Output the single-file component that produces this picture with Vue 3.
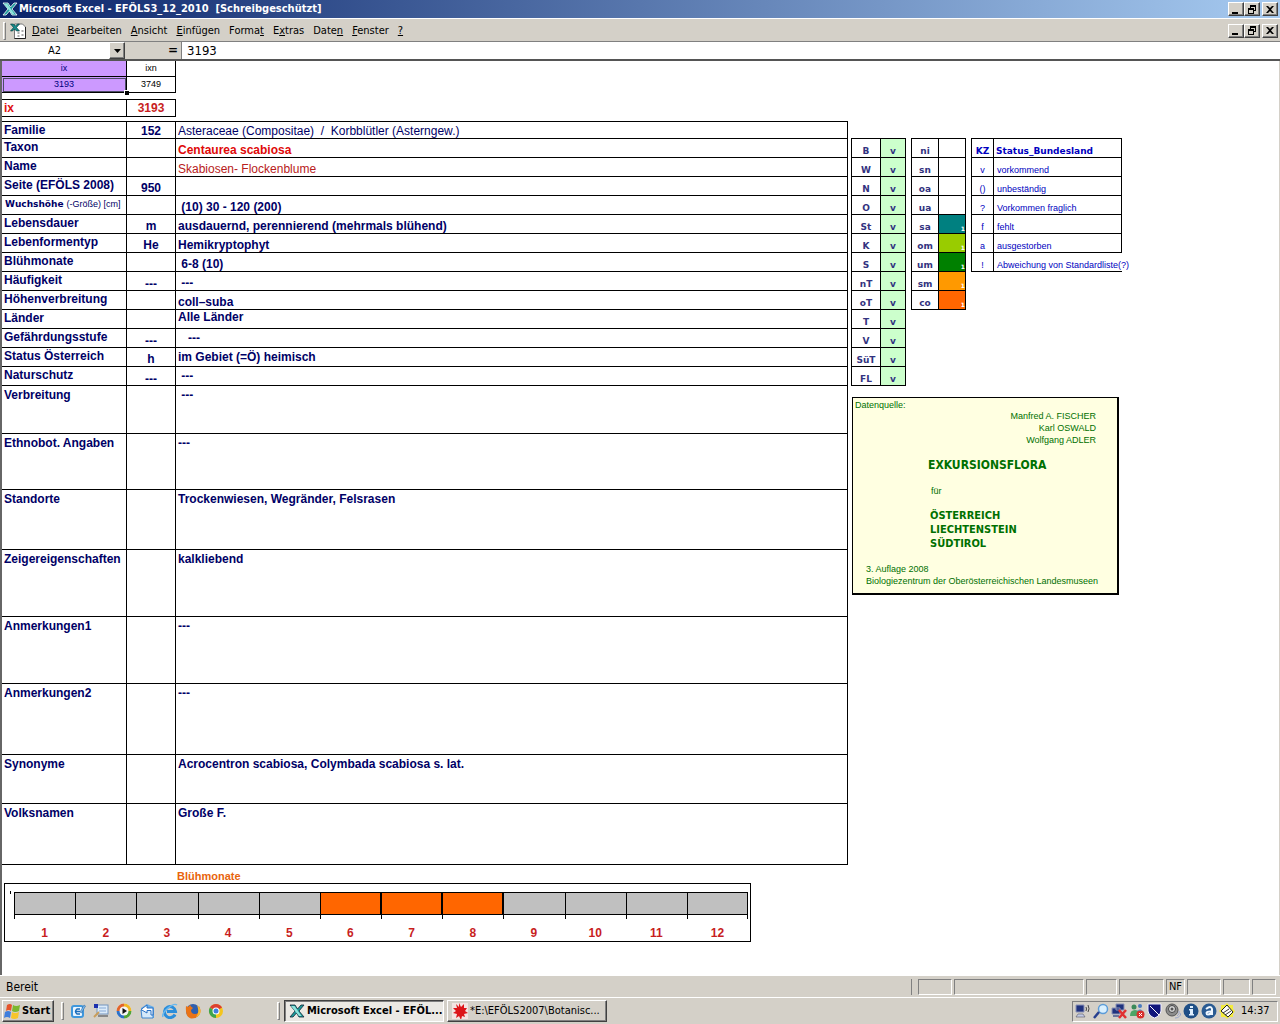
<script setup>
import { ref } from 'vue'

const nameBox = ref('A2')
const formula = ref('3193')

const menus = [
  ['', 'D', 'atei'],
  ['', 'B', 'earbeiten'],
  ['', 'A', 'nsicht'],
  ['', 'E', 'infügen'],
  ['Forma', 't', ''],
  ['E', 'x', 'tras'],
  ['Date', 'n', ''],
  ['', 'F', 'enster'],
  ['', '?', '']
]

const records = [
  { label: 'Familie', code: '152', text: 'Asteraceae (Compositae)  /  Korbblütler (Asterngew.)', row: 'first', cell: 'light' },
  { label: 'Taxon', code: '', text: 'Centaurea scabiosa', cell: 'taxon' },
  { label: 'Name', code: '', text: 'Skabiosen- Flockenblume', cell: 'light common' },
  { label: 'Seite (EFÖLS 2008)', code: '950', text: '' },
  { label: 'Wuchshöhe', hint: '(-Größe) [cm]', code: '', text: ' (10) 30 - 120 (200)' },
  { label: 'Lebensdauer', code: 'm', text: 'ausdauernd, perennierend (mehrmals blühend)' },
  { label: 'Lebenformentyp', code: 'He', text: 'Hemikryptophyt' },
  { label: 'Blühmonate', code: '', text: ' 6-8 (10)' },
  { label: 'Häufigkeit', code: '---', text: ' ---' },
  { label: 'Höhenverbreitung', code: '', text: 'coll–suba' },
  { label: 'Länder', code: '', text: 'Alle Länder', cell: 'top' },
  { label: 'Gefährdungsstufe', code: '---', text: '   ---', cell: 'middle' },
  { label: 'Status Österreich', code: 'h', text: 'im Gebiet (=Ö) heimisch', cell: 'middle' },
  { label: 'Naturschutz', code: '---', text: ' ---', cell: 'middle' },
  { label: 'Verbreitung', code: '', text: ' ---', row: 'tall h48' },
  { label: 'Ethnobot. Angaben', code: '', text: '---', row: 'tall h56' },
  { label: 'Standorte', code: '', text: 'Trockenwiesen, Wegränder, Felsrasen', row: 'tall h60' },
  { label: 'Zeigereigenschaften', code: '', text: 'kalkliebend', row: 'tall h67' },
  { label: 'Anmerkungen1', code: '', text: '---', row: 'tall h67' },
  { label: 'Anmerkungen2', code: '', text: '---', row: 'tall h71' },
  { label: 'Synonyme', code: '', text: 'Acrocentron scabiosa, Colymbada scabiosa s. lat.', row: 'tall h49' },
  { label: 'Volksnamen', code: '', text: 'Große F.', row: 'tall h61' }
]

const states = ['B', 'W', 'N', 'O', 'St', 'K', 'S', 'nT', 'oT', 'T', 'V', 'SüT', 'FL']

const zones = [
  { name: 'ni' }, { name: 'sn' }, { name: 'oa' }, { name: 'ua' },
  { name: 'sa', fill: 'teal' },
  { name: 'om', fill: 'lime' },
  { name: 'um', fill: 'green' },
  { name: 'sm', fill: 'amber' },
  { name: 'co', fill: 'orange' }
]

const legend = [
  ['v', 'vorkommend'],
  ['()', 'unbeständig'],
  ['?', 'Vorkommen fraglich'],
  ['f', 'fehlt'],
  ['a', 'ausgestorben'],
  ['!', 'Abweichung von Standardliste(?)']
]

const flowering = [6, 7, 8]
</script>

<template>
  <div class="desktop">
    <header class="titlebar">
      <svg class="app-icon" viewBox="0 0 16 16" aria-hidden="true">
        <path d="M1 2h5l2.500 4L12 2h3l-5 6 5 6h-5l-2.500-4L4 14H1l5-6z" fill="#1c9c9c" stroke="#fff" stroke-width=".8" />
        <path d="M2 3h3.500l7 10H10z" fill="#8fe4dc" />
      </svg>
      <h1>Microsoft Excel - EFÖLS3_12_2010&nbsp; [Schreibgeschützt]</h1>
      <div class="window-buttons">
        <button aria-label="Minimieren"><svg viewBox="0 0 12 11"><path d="M2 8h6v2H2z" /></svg></button>
        <button aria-label="Wiederherstellen"><svg viewBox="0 0 12 11"><path d="M4 1h6v6H8V6h1V3H5v1H4zM2 4h6v6H2zM3 6v3h4V6z" fill-rule="evenodd" /></svg></button>
        <button class="close" aria-label="Schließen"><svg viewBox="0 0 12 11"><path d="M2 2h2l2 2 2-2h2L7 5.500 10 9H8L6 7 4 9H2l3-3.500z" /></svg></button>
      </div>
    </header>

    <nav class="menubar">
      <span class="grip"></span>
      <svg class="doc-icon" viewBox="0 0 16 16" aria-hidden="true">
        <path d="M4 1h8l3 3v11.500H4z" fill="#fff" stroke="#777" />
        <path d="M15 4v11.500H4" fill="none" stroke="#222" />
        <path d="M7 9h2v2H7zM11 7h2v2h-2zM7 12h2v2H7zM11 11h2v2h-2z" fill="#aaa" />
        <path d="M0 1h3l2 2 2-2h2L6 4.500 9 8H6L4 6 2 8H0l3-3.500z" fill="#168a8a" stroke="#033" stroke-width=".6" />
      </svg>
      <button v-for="(m, i) in menus" :key="i" class="menu">{{ m[0] }}<u>{{ m[1] }}</u>{{ m[2] }}</button>
      <div class="window-buttons">
        <button aria-label="Fenster minimieren"><svg viewBox="0 0 12 11"><path d="M2 8h6v2H2z" /></svg></button>
        <button aria-label="Fenster wiederherstellen"><svg viewBox="0 0 12 11"><path d="M4 1h6v6H8V6h1V3H5v1H4zM2 4h6v6H2zM3 6v3h4V6z" fill-rule="evenodd" /></svg></button>
        <button class="close" aria-label="Fenster schließen"><svg viewBox="0 0 12 11"><path d="M2 2h2l2 2 2-2h2L7 5.500 10 9H8L6 7 4 9H2l3-3.500z" /></svg></button>
      </div>
    </nav>

    <div class="formula-bar">
      <input v-model="nameBox" class="name-box" aria-label="Namenfeld">
      <button class="drop" aria-label="Namen anzeigen"><svg viewBox="0 0 7 4"><path d="M0 0h7L3.500 4z" /></svg></button>
      <span class="equals">=</span>
      <input v-model="formula" class="formula" aria-label="Bearbeitungsleiste">
    </div>

    <main class="sheet">
      <section class="record">
        <table class="index">
          <tbody>
            <tr><td class="filled">ix</td><td>ixn</td></tr>
            <tr><td class="filled selected">3193</td><td>3749</td></tr>
          </tbody>
        </table>
        <table class="index current">
          <tbody>
            <tr><th scope="row">ix</th><td>3193</td></tr>
          </tbody>
        </table>

        <table class="details">
          <colgroup><col class="c-label"><col class="c-code"><col></colgroup>
          <tbody>
            <tr v-for="r in records" :key="r.label" :class="r.row">
              <th scope="row" :class="{ compact: r.hint }">{{ r.label }}<small v-if="r.hint">{{ r.hint }}</small></th>
              <td class="code" :class="{ dash: r.code === '---' }">{{ r.code }}</td>
              <td :class="r.cell">{{ r.text }}</td>
            </tr>
          </tbody>
        </table>

        <h2>Blühmonate</h2>
        <div class="chart">
          <div v-for="m in 12" :key="m" class="month" :class="{ on: flowering.includes(m) }">
            <div class="bar"></div>
            <div class="tick"></div>
            <span>{{ m }}</span>
          </div>
        </div>
      </section>

      <aside class="side">
        <div class="grids">
          <table class="grid states">
            <tbody>
              <tr v-for="s in states" :key="s"><th scope="row">{{ s }}</th><td>v</td></tr>
            </tbody>
          </table>
          <table class="grid zones">
            <tbody>
              <tr v-for="z in zones" :key="z.name"><th scope="row">{{ z.name }}</th><td :class="z.fill">{{ z.fill ? '1' : '' }}</td></tr>
            </tbody>
          </table>
          <table class="grid legend">
            <thead>
              <tr><th scope="col">KZ</th><th scope="col">Status_Bundesland</th></tr>
            </thead>
            <tbody>
              <tr v-for="l in legend" :key="l[0]"><td>{{ l[0] }}</td><td>{{ l[1] }}</td></tr>
            </tbody>
          </table>
        </div>

        <div class="source">
          <p>Datenquelle:</p>
          <p class="authors">Manfred A. FISCHER<br>Karl OSWALD<br>Wolfgang ADLER</p>
          <h3>EXKURSIONSFLORA</h3>
          <p class="for">für</p>
          <p class="lands">ÖSTERREICH<br>LIECHTENSTEIN<br>SÜDTIROL</p>
          <p class="edition">3. Auflage 2008<br>Biologiezentrum der Oberösterreichischen Landesmuseen</p>
        </div>
      </aside>
    </main>

    <div class="statusbar">
      <span class="ready">Bereit</span>
      <div class="panes">
        <span class="w34"></span><span class="w130"></span><span class="w31"></span><span class="w45"></span>
        <span class="w19">NF</span><span class="w34"></span><span class="w27"></span><span class="w24"></span>
      </div>
    </div>

    <footer class="taskbar">
      <button class="start">
        <svg viewBox="0 0 16 16" aria-hidden="true">
          <path d="M3 2q3-2 5 0L7 8Q5 6 2 8z" fill="#e5532a" />
          <path d="M9 2q3 2 7 0l-1 6q-4 2-7 0z" fill="#7cb82f" />
          <path d="M1 9q3-2 6 0l-1 6q-3-2-6 0z" fill="#3f7fdc" />
          <path d="M8 9q3 2 7 0l-1 6q-4 2-7 0z" fill="#f7c52b" />
        </svg>
        Start
      </button>
      <span class="grip"></span>
      <div class="quick">
        <button aria-label="Desktop anzeigen"><svg viewBox="0 0 16 16"><rect x="1" y="2" width="13" height="13" rx="3" fill="#3f97dc" /><rect x="3" y="4" width="9" height="9" rx="1" fill="#eaf5ff" /><path d="M10 6H7q-3 2.500 0 5h3M6 8.500h4" fill="none" stroke="#1c6dbb" stroke-width="1.500" /><path d="M10 9l4-7 1.500 1-4 7z" fill="#7db9ea" stroke="#1c5c9c" stroke-width=".5" /></svg></button>
        <button aria-label="Adressbuch"><svg viewBox="0 0 16 16"><rect x="4" y="2" width="11" height="9" fill="#dcebf9" stroke="#7393bd" /><path d="M6 5h7M6 8h7" stroke="#86a9d6" /><path d="M1 1h4v4H1z" fill="#1c2fae" /><path d="M1 14l5-5" stroke="#c99d5a" stroke-width="2" /><path d="M5 13h10" stroke="#888" stroke-width="2" /></svg></button>
        <button aria-label="Media Player"><svg viewBox="0 0 16 16"><circle cx="8" cy="8" r="7.500" fill="#f0f4f8" /><path d="M8 .5A7.500 7.500 0 0 0 .5 8H4a4 4 0 0 1 4-4z" fill="#e3642a" /><path d="M8 .5A7.500 7.500 0 0 1 15.500 8H12a4 4 0 0 0-4-4z" fill="#f2b623" /><path d="M.5 8A7.500 7.500 0 0 0 8 15.500V12a4 4 0 0 1-4-4z" fill="#2e72c8" /><path d="M15.500 8A7.500 7.500 0 0 1 8 15.500V12a4 4 0 0 0 4-4z" fill="#52a537" /><circle cx="8" cy="8" r="4.500" fill="#f5f5f5" /><path d="M6.500 5l4.500 3-4.500 3z" fill="#111" /></svg></button>
        <button aria-label="E-Mail"><svg viewBox="0 0 16 16"><path d="M2 5l6-4 7 3v11H3z" fill="#69aee9" /><path d="M2 7h12v8H3z" fill="#d4e9fb" stroke="#3f84cc" /><path d="M9 5h5v7h-2V7.500H8V10L2 6.500 8 2v3z" fill="#fff" stroke="#2870c4" /></svg></button>
        <button aria-label="Internet Explorer"><svg viewBox="0 0 16 16"><path d="M13 11.500A5.500 5.500 0 1 1 13.500 8.500H5" fill="none" stroke="#2b8edb" stroke-width="3" /><path d="M1 14C-1 10 11-1 15 2" fill="none" stroke="#69b8ee" stroke-width="1.500" /></svg></button>
        <button aria-label="Firefox"><svg viewBox="0 0 16 16"><circle cx="8" cy="8" r="7" fill="#2f5fae" /><path d="M1 3l2 1 2-2q1 2 3 3l-2 2q0 4 4 4 5 0 4-8 3 5 0 9-3 4-8 3.500Q0 14 1 3z" fill="#ea7316" /><path d="M12 2q5 4 3 9-2 3-4 3 4-4 1-12z" fill="#f7b733" /></svg></button>
        <button aria-label="Chrome"><svg viewBox="0 0 16 16"><circle cx="8" cy="8" r="7" fill="#f4c51d" /><path d="M8 8L1.900 4.500A7 7 0 0 1 14.100 4.500z" fill="#dc3f31" /><path d="M8 8h-1L1.900 4.500A7 7 0 0 0 8 15z" fill="#3da44f" /><circle cx="8" cy="8" r="3.500" fill="#fff" /><circle cx="8" cy="8" r="2.500" fill="#3f7fe0" /></svg></button>
      </div>
      <span class="grip"></span>
      <button class="task active">
        <svg viewBox="0 0 16 16" aria-hidden="true">
          <path d="M1 2h5l2.500 4L12 2h3l-5 6 5 6h-5l-2.500-4L4 14H1l5-6z" fill="#1c9c9c" stroke="#123" stroke-width=".8" />
          <path d="M2 3h3.500l7 10H10z" fill="#8fe4dc" />
        </svg>
        Microsoft Excel - EFÖL...
      </button>
      <button class="task">
        <svg viewBox="0 0 16 16" aria-hidden="true">
          <path d="M0 0h16v16H0z" fill="#f3e4e2" />
          <path d="M7 0l2 4 3-3 0 4 3 0-2 3 3 2-4 1 1 3-3-1-1 4-2-4-3 2 1-4-4-1 3-2-3-3 4 0-1-4 3 3z" fill="#dc1418" />
        </svg>
        *E:\EFÖLS2007\Botanisc...
      </button>
      <div class="tray">
        <svg viewBox="0 0 16 16"><path d="M1 2h8v7H1z" fill="#20327e" stroke="#8b93b8" /><path d="M3 11h5l2 3H1z" fill="#c4cce6" stroke="#556" stroke-width=".6" /><path d="M11 4q1 2 0 4M13 2q2 4 0 7" fill="none" stroke="#444" /></svg>
        <svg viewBox="0 0 16 16"><circle cx="10" cy="6" r="4.500" fill="#d9f0ff" stroke="#5c9cd8" stroke-width="1.500" /><path d="M1 15l5-6" stroke="#27408f" stroke-width="2.500" /></svg>
        <svg viewBox="0 0 16 16"><path d="M5 1h8v6H5zM1 5h8v6H1z" fill="#20327e" stroke="#8b93b8" /><path d="M2 13h6" stroke="#6b759c" stroke-width="2" /><path d="M8 7l7 8M15 7l-7 8" stroke="#e03030" stroke-width="2.500" /></svg>
        <svg viewBox="0 0 16 16"><circle cx="5" cy="4" r="2.500" fill="#3b8a5a" /><circle cx="11" cy="3" r="2" fill="#4b7bc0" /><path d="M1 13q0-6 5-6t5 6z" fill="#4ba567" /><path d="M8 8q4-4 6 1z" fill="#6596d0" /><circle cx="11.500" cy="11.500" r="4" fill="#d8302c" /><path d="M10 10l3 3M13 10l-3 3" stroke="#fff" /></svg>
        <svg viewBox="0 0 16 16"><path d="M1 1h13v7q-1 5-6.500 7Q2 13 1 8z" fill="#11167c" stroke="#eef" /><path d="M3 3l9 9" stroke="#fff" /></svg>
        <svg viewBox="0 0 16 16"><circle cx="7" cy="7" r="6" fill="#8c8c8c" stroke="#555" /><circle cx="7" cy="6" r="3.500" fill="#d8d8d8" stroke="#444" /><circle cx="7" cy="6" r="1.500" fill="#555" /><path d="M12 13q3-2 2-5M10 15q5 0 6-5" fill="none" stroke="#9ba6cc" /></svg>
        <svg viewBox="0 0 16 16"><circle cx="8" cy="8" r="7.500" fill="#1f4f86" /><path d="M7 3h3v2H7zM6 6h4v5h1v1.500H6V11h1V7.500H6z" fill="#dff0ff" /></svg>
        <svg viewBox="0 0 16 16"><circle cx="8" cy="8" r="7.500" fill="#2a5b92" /><path d="M5 6q5-4 6 0v6M11 8.500q-5-.5-5.500 1.500 0 3 5.500 0" fill="none" stroke="#eef7ff" stroke-width="2" /></svg>
        <svg viewBox="0 0 16 16"><path d="M8 0l2 2h4v4l2 2-2 3v3h-4l-2 2-2-2H2v-4L0 8l2-2V2h4z" fill="#f4ec3c" /><path d="M2 8l6-6 6 7-5 5z" fill="#fff" stroke="#222" /><path d="M4 10l6-4M6 12l6-4" stroke="#333" /></svg>
        <time>14:37</time>
      </div>
    </footer>
  </div>
</template>

<style>
body {
  margin: 0;
}
</style>

<style scoped>
.desktop {
  display: flex;
  flex-direction: column;
  min-height: 100vh;
  background: #d4d0c8;
  color: #000;
  font: 11px/14px "DejaVu Sans Condensed", "DejaVu Sans", sans-serif;
}
.desktop *,
.desktop *::before,
.desktop *::after {
  box-sizing: border-box;
}
button,
input {
  margin: 0;
  padding: 0;
  border: 0;
  background: none;
  color: inherit;
  font: inherit;
}
h1, h2, h3, p {
  margin: 0;
}
table {
  border-collapse: separate;
  border-spacing: 0;
  table-layout: fixed;
}
th, td {
  padding: 0;
  text-align: left;
}

.titlebar {
  display: flex;
  align-items: center;
  height: 18px;
  padding: 0 2px;
  background: linear-gradient(90deg, #0a246a, #a6caf0);
  color: #fff;
}
.titlebar h1 {
  flex: 1;
  font-size: 11px;
  font-weight: bold;
  white-space: nowrap;
}
.app-icon {
  width: 16px;
  height: 16px;
  margin-right: 1px;
}
.window-buttons {
  display: flex;
  margin-left: auto;
}
.window-buttons button {
  display: flex;
  align-items: center;
  width: 16px;
  height: 14px;
  border: 1px solid;
  border-color: #fff #404040 #404040 #fff;
  background: #d4d0c8;
  box-shadow: inset -1px -1px #808080;
}
.window-buttons .close {
  margin-left: 2px;
}
.window-buttons svg {
  width: 12px;
  height: 11px;
  margin-left: 1px;
}

.menubar {
  display: flex;
  align-items: center;
  height: 24px;
  padding: 1px 2px 0 3px;
  border-top: 1px solid #fff;
  border-bottom: 1px solid #808080;
}
.grip {
  flex: none;
  width: 3px;
  height: 18px;
  border: 1px solid;
  border-color: #fff #808080 #808080 #fff;
}
.menubar .grip {
  margin-right: 4px;
}
.doc-icon {
  width: 17px;
  height: 16px;
}
.menu {
  padding: 0 4px 0 5px;
}

.formula-bar {
  display: flex;
  height: 19px;
  border-bottom: 2px solid #555;
}
.name-box {
  width: 109px;
  background: #fff;
  text-align: center;
}
.drop {
  width: 16px;
  border: 1px solid;
  border-color: #fff #404040 #404040 #fff;
  box-shadow: inset -1px -1px #808080;
}
.drop svg {
  display: block;
  width: 7px;
  height: 4px;
  margin: 0 auto;
}
.equals {
  width: 57px;
  padding-right: 3px;
  border-right: 1px solid #808080;
  font: bold 12px/17px "DejaVu Sans", sans-serif;
  text-align: right;
}
.formula {
  flex: 1;
  min-width: 0;
  padding-left: 5px;
  background: #fff;
  font-size: 13px;
}

.sheet {
  display: flex;
  flex: 1;
  align-items: flex-start;
  padding-bottom: 33px;
  border: solid #d4d0c8;
  border-width: 0 1px 0 0;
  background: #fff;
  box-shadow: inset 2px 0 #666;
  font-family: "Liberation Sans", Arial, sans-serif;
}
.record {
  flex: 1;
  min-width: 0;
  padding-left: 2px;
}
.index {
  width: 174px;
  font-size: 9px;
  line-height: 13px;
}
.index td,
.index th {
  width: 49px;
  height: 16px;
  border: solid #000;
  border-width: 0 1px 1px 0;
  text-align: center;
}
.index tr > :first-child {
  width: 125px;
}
.index .filled {
  background: #c9f;
  color: #000080;
}
.index .selected {
  position: relative;
  outline: 1px solid #4d4d66;
  outline-offset: -2px;
}
.selected::after {
  content: "";
  position: absolute;
  right: -3px;
  bottom: -3px;
  width: 5px;
  height: 5px;
  border: solid #fff;
  border-width: 1px 0 0 1px;
  background: #000;
}
.index.current {
  margin-top: 6px;
  border-top: 1px solid #000;
  color: #e01010;
  font-size: 12px;
}
.index.current th {
  height: 17px;
  padding-left: 2px;
  text-align: left;
}
.index.current td {
  height: 17px;
  color: #c81e1e;
  font-weight: bold;
}
.details {
  width: 100%;
  margin-top: 4px;
  border-top: 1px solid #000;
  color: #000066;
  font-size: 12px;
  font-weight: bold;
}
.c-label {
  width: 125px;
}
.c-code {
  width: 49px;
}
.details tr {
  height: 19px;
}
.details .first {
  height: 17px;
}
.details th,
.details td {
  padding: 1px 0 0 2px;
  border: solid #000;
  border-width: 0 1px 1px 0;
  vertical-align: bottom;
  white-space: pre;
}
.details th,
.details .top {
  vertical-align: top;
}
.details .top {
  padding-top: 0;
}
.details .middle {
  vertical-align: middle;
  padding-top: 0;
}
.details .code {
  padding-left: 0;
  text-align: center;
}
.details .dash {
  line-height: 12px;
}
.details .light {
  font-weight: normal;
}
.details .taxon {
  color: #e00808;
}
.details .common {
  color: #b82020;
}
.details .compact {
  padding-left: 3px;
  font: bold 9px/14px "DejaVu Sans", sans-serif;
}
.compact small {
  margin-left: 3px;
  font: 9px/14px "Liberation Sans", Arial, sans-serif;
}
.details .tall th,
.details .tall td {
  padding-top: 2px;
  vertical-align: top;
}
.details .h48 { height: 48px; }
.details .h49 { height: 49px; }
.details .h56 { height: 56px; }
.details .h60 { height: 60px; }
.details .h61 { height: 61px; }
.details .h67 { height: 67px; }
.details .h71 { height: 71px; }

.record h2 {
  margin: 4px 0 0 175px;
  color: #e8640c;
  font-size: 11px;
  line-height: 14px;
}
.chart {
  position: relative;
  display: flex;
  height: 59px;
  margin: 0 97px 0 2px;
  padding: 8px 2px 0 9px;
  border: 1px solid #000;
}
.chart::before {
  content: "";
  position: absolute;
  top: 7px;
  left: 5px;
  width: 1px;
  height: 3px;
  background: #000;
}
.month {
  flex: 1;
  color: #c81e1e;
  font-size: 12px;
  font-weight: bold;
  text-align: center;
}
.bar {
  height: 23px;
  border: solid #000;
  border-width: 1px 0 1px 1px;
  background: #c0c0c0;
}
.on .bar {
  border-right-width: 1px;
  background: #f60;
}
.month:last-child .bar {
  border-right-width: 1px;
}
.tick {
  height: 4px;
  margin-bottom: 7px;
  border-left: 1px solid #000;
}
.month:last-child .tick {
  border-right: 1px solid #000;
}

.side {
  flex: none;
  width: 431px;
  padding: 77px 0 0 3px;
}
.grids {
  display: flex;
  align-items: flex-start;
  gap: 5px;
}
.grid {
  border: solid #000;
  border-width: 1px 0 0 1px;
  color: #333380;
  font: bold 9px/12px "DejaVu Sans", sans-serif;
}
.grid th,
.grid td {
  height: 19px;
  border: solid #000;
  border-width: 0 1px 1px 0;
  text-align: center;
  vertical-align: bottom;
}
.states { width: 55px; }
.states th { width: 29px; }
.states td { background: #cfc; }
.zones { width: 55px; }
.zones th { width: 27px; }
.zones td {
  color: #fff;
  font-size: 6px;
  line-height: 8px;
  text-align: right;
}
.zones .teal { background: #008080; }
.zones .lime { background: #9c0; }
.zones .green { background: #008000; }
.zones .amber { background: #f90; }
.zones .orange { background: #f60; }
.legend {
  width: 151px;
  color: #0000c0;
}
.legend th:first-child { width: 22px; }
.legend th:last-child {
  padding-left: 2px;
  text-align: left;
}
.legend td {
  font: 9px/12px "Liberation Sans", Arial, sans-serif;
}
.legend td:last-child {
  padding-left: 3px;
  text-align: left;
  white-space: nowrap;
}
.legend tr:last-child td:last-child {
  border-right: 0;
}

.source {
  width: 267px;
  margin: 11px 0 0 1px;
  padding: 1px 2px 6px;
  border: 1px solid #000;
  border-width: 1px 2px 2px 1px;
  background: #ffffe1;
  color: #007000;
  font-size: 9px;
  line-height: 12px;
}
.authors {
  margin-top: -1px;
  padding-right: 19px;
  text-align: right;
}
.source h3 {
  margin: 11px 0 0 73px;
  font: bold 12px/16px "DejaVu Sans Condensed", sans-serif;
}
.for {
  margin: 12px 0 0 76px;
}
.lands {
  margin: 12px 0 0 75px;
  font: bold 11px/14px "DejaVu Sans Condensed", sans-serif;
}
.edition {
  margin: 12px 0 0 11px;
}

.statusbar {
  display: flex;
  align-items: center;
  height: 23px;
  padding: 0 4px 0 6px;
  border-top: 1px solid #fff;
  border-bottom: 1px solid #fff;
}
.ready {
  font-size: 12px;
}
.panes {
  display: flex;
  gap: 2px;
  margin-left: auto;
  padding-left: 6px;
  border-left: 1px solid #808080;
}
.panes span {
  height: 16px;
  border: 1px solid;
  border-color: #808080 #fff #fff #808080;
  text-align: center;
}
.w19 { width: 19px; }
.w24 { width: 24px; }
.w27 { width: 27px; }
.w31 { width: 31px; }
.w34 { width: 34px; }
.w45 { width: 45px; }
.w130 { width: 130px; }

.taskbar {
  display: flex;
  align-items: center;
  height: 26px;
  padding: 0 2px;
}
.start,
.task {
  display: flex;
  align-items: center;
  gap: 2px;
  height: 22px;
  border: 1px solid;
  border-color: #fff #404040 #404040 #fff;
  box-shadow: inset -1px -1px #808080;
  white-space: nowrap;
}
.start {
  width: 52px;
  margin-right: 7px;
  padding-left: 1px;
  font-weight: bold;
}
.taskbar svg {
  flex: none;
  width: 16px;
  height: 16px;
}
.quick {
  display: flex;
  gap: 7px;
  width: 208px;
  margin-right: 5px;
  padding-left: 6px;
}
.quick button {
  display: flex;
}
.task {
  width: 160px;
  margin-left: 3px;
  padding-left: 4px;
}
.grip + .task {
  margin-left: 4px;
}
.task.active {
  border-color: #404040 #fff #fff #404040;
  background: #ebe9e4;
  box-shadow: inset 1px 1px #808080;
  font-weight: bold;
}
.tray {
  display: flex;
  align-items: center;
  gap: 2px;
  width: 206px;
  height: 21px;
  margin-left: auto;
  padding-left: 2px;
  border: 1px solid;
  border-color: #808080 #fff #fff #808080;
}
.tray time {
  margin-left: 4px;
}
</style>
